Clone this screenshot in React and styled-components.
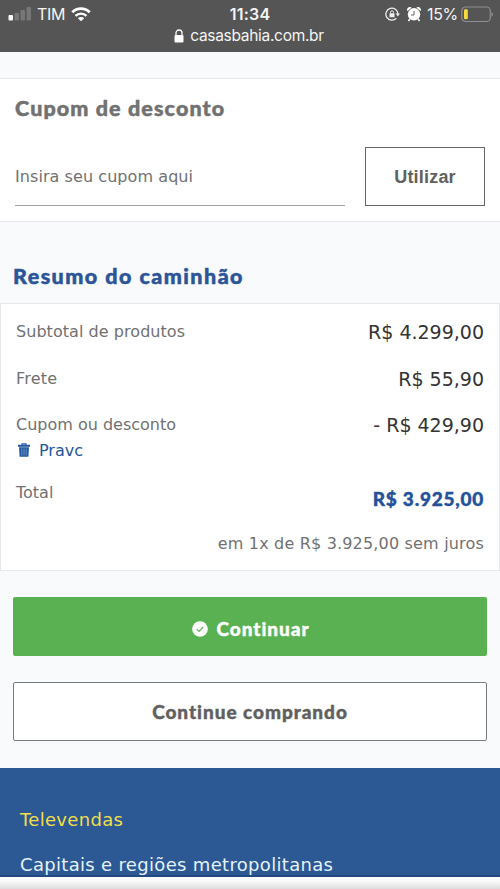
import React from "react"
import styled, { createGlobalStyle } from "styled-components"

const GlobalStyle = createGlobalStyle`
  * {
    box-sizing: border-box;
  }

  body {
    margin: 0;
    background: #f9fafc;
    font-family: "DejaVu Sans", Verdana, sans-serif;
    overflow: hidden;
  }
`

const Page = styled.div`
  display: flex;
  flex-direction: column;
  width: 500px;
  height: 889px;
  overflow: hidden;
`

const StatusBar = styled.header`
  height: 52px;
  flex-shrink: 0;
  background: #555;
  color: #f4f4f4;
  font-family: Inter, "Liberation Sans", sans-serif;
`

const StatusRow = styled.div`
  display: grid;
  grid-template-columns: 1fr auto 1fr;
  align-items: center;
  height: 27px;
  padding: 1px 6px 0 8px;
  line-height: 20px;
`

const StatusSide = styled.div`
  display: flex;
  align-items: center;
  justify-content: ${(props) => (props.$end ? "flex-end" : "flex-start")};
  font-size: 16px;
`

const Carrier = styled.span`
  margin: 0 6px 0 5px;
  letter-spacing: -0.3px;
`

const Battery = styled.span`
  margin: 0 3px 0 6px;
  letter-spacing: -0.3px;
`

const Clock = styled.span`
  margin-right: 2px;
  font-size: 16px;
  font-weight: 600;
  letter-spacing: 0.2px;
`

const AddressRow = styled.div`
  display: flex;
  justify-content: center;
  align-items: center;
  gap: 6px;
  height: 17px;
  padding-right: 2px;
  font-size: 15.5px;
  letter-spacing: -0.3px;
`

const Coupon = styled.section`
  height: 144px;
  flex-shrink: 0;
  margin-top: 26px;
  padding: 16px 15px 0;
  background: #fff;
  border-top: 1px solid #e6e8eb;
  border-bottom: 1px solid #e6e8eb;
`

const Title = styled.h2`
  margin: 0;
  color: ${(props) => props.$color || "#717171"};
  font-family: Lato, sans-serif;
  font-size: 21.5px;
  font-weight: 900;
  line-height: 26px;
  letter-spacing: ${(props) => props.$spacing};
  -webkit-text-stroke: 0.5px currentColor;
  white-space: nowrap;
`

const CouponForm = styled.div`
  display: flex;
  gap: 20px;
  margin-top: 26px;
`

const Field = styled.div`
  width: 330px;
  height: 59px;
  border-bottom: 1px solid #a2a2a2;
  color: #717171;
  font-size: 16px;
  line-height: 60px;
  letter-spacing: 0.07px;
`

const ApplyButton = styled.button`
  width: 120px;
  height: 59px;
  padding: 2px 0 0;
  background: #fff;
  border: 1px solid #666;
  border-radius: 0;
  color: #606060;
  font-family: "Liberation Sans", Arial, sans-serif;
  font-size: 18px;
  font-weight: 700;
  letter-spacing: 0.2px;
`

const SummaryTitle = styled.div`
  height: 81px;
  flex-shrink: 0;
  padding: 41px 13px 0;
`

const Summary = styled.section`
  height: 268px;
  flex-shrink: 0;
  padding: 16px 15px 0;
  background: #fff;
  border: 1px solid #e6e8eb;
`

const Row = styled.div`
  display: flex;
  justify-content: space-between;
  height: ${(props) => props.$height || "47px"};
`

const Label = styled.div`
  color: #717171;
  font-size: 16px;
  line-height: 24px;
  letter-spacing: ${(props) => props.$spacing || "0"};
`

const Price = styled.div`
  color: #333;
  font-size: 19px;
  line-height: 25px;
`

const TotalPrice = styled.div`
  padding-top: 5px;
  color: #23529a;
  font-family: Lato, sans-serif;
  font-size: 19px;
  font-weight: 900;
  line-height: 26px;
  letter-spacing: 0.75px;
  -webkit-text-stroke: 0.4px currentColor;
`

const CouponCode = styled.div`
  display: flex;
  align-items: center;
  gap: 9px;
  margin-top: 4px;
  padding-left: 2px;
  color: #23579f;
`

const Installments = styled.div`
  color: #717171;
  font-size: 16px;
  line-height: 24px;
  letter-spacing: 0.18px;
  text-align: right;
`

const Actions = styled.div`
  display: flex;
  flex-direction: column;
  flex-shrink: 0;
  gap: 26px;
  height: 197px;
  padding: 26px 13px 0;
`

const ActionButton = styled.button`
  display: flex;
  align-items: center;
  justify-content: center;
  gap: 8px;
  height: 59px;
  padding: ${(props) => (props.$primary ? "4px 0 0 2px" : "0")};
  background: ${(props) => (props.$primary ? "#59b151" : "#fff")};
  border: ${(props) => (props.$primary ? "0" : "1px solid #777a80")};
  border-radius: 2px;
  color: ${(props) => (props.$primary ? "#fff" : "#606060")};
  font-family: Lato, sans-serif;
  font-size: 19px;
  font-weight: 900;
  letter-spacing: 0.95px;
  -webkit-text-stroke: 0.4px currentColor;
`

const Footer = styled.footer`
  height: 109px;
  flex-shrink: 0;
  padding: 40px 20px 0;
  background: #2c5894;
  border-bottom: 2px solid #234982;
`

const FooterText = styled.p`
  margin: 0 0 21px;
  color: ${(props) => (props.$highlight ? "#f0df4b" : "#e4f2fc")};
  font-size: 18px;
  line-height: 24px;
  letter-spacing: 0.32px;
  white-space: nowrap;
`

const BottomBar = styled.div`
  flex: 1;
  background: linear-gradient(#fafafa 35%, #dedbdd);
`

const SignalIcon = () => (
  <svg width="24" height="16" viewBox="0 0 24 16">
    <rect x="0.5" y="9" width="4.5" height="5.5" rx="1" fill="#fff" />
    <rect x="6.5" y="7" width="4.5" height="7.5" rx="1" fill="#777" />
    <rect x="12.5" y="4" width="4.5" height="10.5" rx="1" fill="#777" />
    <rect x="18.5" y="1" width="4.5" height="13.5" rx="1" fill="#777" />
  </svg>
)

const WifiIcon = () => (
  <svg width="20" height="16" viewBox="0 0 20 16" fill="none" stroke="#fff">
    <path d="M1.3 6.3a12.3 12.3 0 0 1 17.4 0" strokeWidth="2.8" />
    <path d="M4.5 9.9a7.8 7.8 0 0 1 11 0" strokeWidth="2.3" />
    <path d="M10 15.3 6.8 12.2a4.6 4.6 0 0 1 6.4 0z" fill="#fff" stroke="none" />
  </svg>
)

const RotationLockIcon = () => (
  <svg width="15" height="14" viewBox="0 0 15 14" fill="none" stroke="#f0f0f0">
    <path d="M11.3 11.3A6 6 0 1 1 12.9 7" strokeWidth="1.3" />
    <path d="m10.6 6.5 2.3 3 2-3z" fill="#f0f0f0" stroke="none" />
    <rect x="4.5" y="6.2" width="5" height="4" rx="0.5" fill="#f0f0f0" stroke="none" />
    <path d="M5.5 6.5V5.3a1.5 1.5 0 0 1 3 0v1.2" strokeWidth="1" />
  </svg>
)

const AlarmIcon = () => (
  <svg width="14" height="15" viewBox="0 0 14 15">
    <path d="M.4 4.1A2.7 2.7 0 0 1 4.6.8zM13.6 4.1A2.7 2.7 0 0 0 9.4.8z" fill="#fff" />
    <circle cx="7" cy="7.3" r="6.2" fill="#fff" />
    <path d="m2.8 12-1.3 2M11.2 12l1.3 2" stroke="#fff" strokeWidth="1.6" />
    <path d="M7 4v4H4" fill="none" stroke="#666" strokeWidth="1" />
  </svg>
)

const BatteryIcon = () => (
  <svg width="33" height="17" viewBox="0 0 33 17">
    <rect x="0.8" y="1" width="28.5" height="14.5" rx="3.8" fill="none" stroke="#909090" strokeWidth="1.2" />
    <rect x="3" y="3.2" width="3.8" height="10" rx="1.3" fill="#f5dc3c" />
    <path d="M30.5 6c2 .9 2 3.8 0 4.7z" fill="#909090" />
  </svg>
)

const LockIcon = () => (
  <svg width="10" height="14" viewBox="0 0 10 14">
    <path d="M2 6.5V4a3 3 0 0 1 6 0v2.5" fill="none" stroke="#fff" strokeWidth="1.3" />
    <rect x="0.5" y="6" width="9" height="7.5" rx="1" fill="#fff" />
  </svg>
)

const TrashIcon = () => (
  <svg width="12" height="15" viewBox="0 0 12 15">
    <path d="M4 2V.9h4V2" fill="none" stroke="#23579f" strokeWidth="1.2" />
    <path d="M0 1.8h12v2H0z" fill="#23579f" />
    <path d="M1 4.2h10l-.6 9.6H1.6z" fill="#23579f" />
    <path d="M3.8 5.5v7M6 5.5v7M8.2 5.5v7" stroke="#8caed4" strokeWidth="0.7" />
  </svg>
)

const CheckIcon = () => (
  <svg width="16" height="16" viewBox="0 0 16 16">
    <circle cx="8" cy="8" r="7.8" fill="#fff" />
    <path d="m4.7 8.2 2.3 2.2L11.2 6" fill="none" stroke="#59b151" strokeWidth="1.1" />
  </svg>
)

const App = () => {
  return (
    <Page>
      <GlobalStyle />
      <StatusBar>
        <StatusRow>
          <StatusSide>
            <SignalIcon />
            <Carrier>TIM</Carrier>
            <WifiIcon />
          </StatusSide>
          <Clock>11:34</Clock>
          <StatusSide $end>
            <RotationLockIcon />
            <svg width="7" height="1" />
            <AlarmIcon />
            <Battery>15%</Battery>
            <BatteryIcon />
          </StatusSide>
        </StatusRow>
        <AddressRow>
          <LockIcon />
          casasbahia.com.br
        </AddressRow>
      </StatusBar>

      <Coupon>
        <Title $spacing="1.1px">Cupom de desconto</Title>
        <CouponForm>
          <Field>Insira seu cupom aqui</Field>
          <ApplyButton>Utilizar</ApplyButton>
        </CouponForm>
      </Coupon>

      <SummaryTitle>
        <Title $color="#2b5597" $spacing="1.45px">
          Resumo do caminhão
        </Title>
      </SummaryTitle>
      <Summary>
        <Row>
          <Label $spacing="0.05px">Subtotal de produtos</Label>
          <Price>R$ 4.299,00</Price>
        </Row>
        <Row $height="46px">
          <Label $spacing="0.2px">Frete</Label>
          <Price>R$ 55,90</Price>
        </Row>
        <Row $height="68px">
          <div>
            <Label>Cupom ou desconto</Label>
            <CouponCode>
              <TrashIcon />
              Pravc
            </CouponCode>
          </div>
          <Price>- R$ 429,90</Price>
        </Row>
        <Row $height="51px">
          <Label>Total</Label>
          <TotalPrice>R$ 3.925,00</TotalPrice>
        </Row>
        <Installments>em 1x de R$ 3.925,00 sem juros</Installments>
      </Summary>

      <Actions>
        <ActionButton $primary>
          <CheckIcon />
          Continuar
        </ActionButton>
        <ActionButton>Continue comprando</ActionButton>
      </Actions>

      <Footer>
        <FooterText $highlight>Televendas</FooterText>
        <FooterText>Capitais e regiões metropolitanas</FooterText>
      </Footer>
      <BottomBar />
    </Page>
  )
}

export default App
